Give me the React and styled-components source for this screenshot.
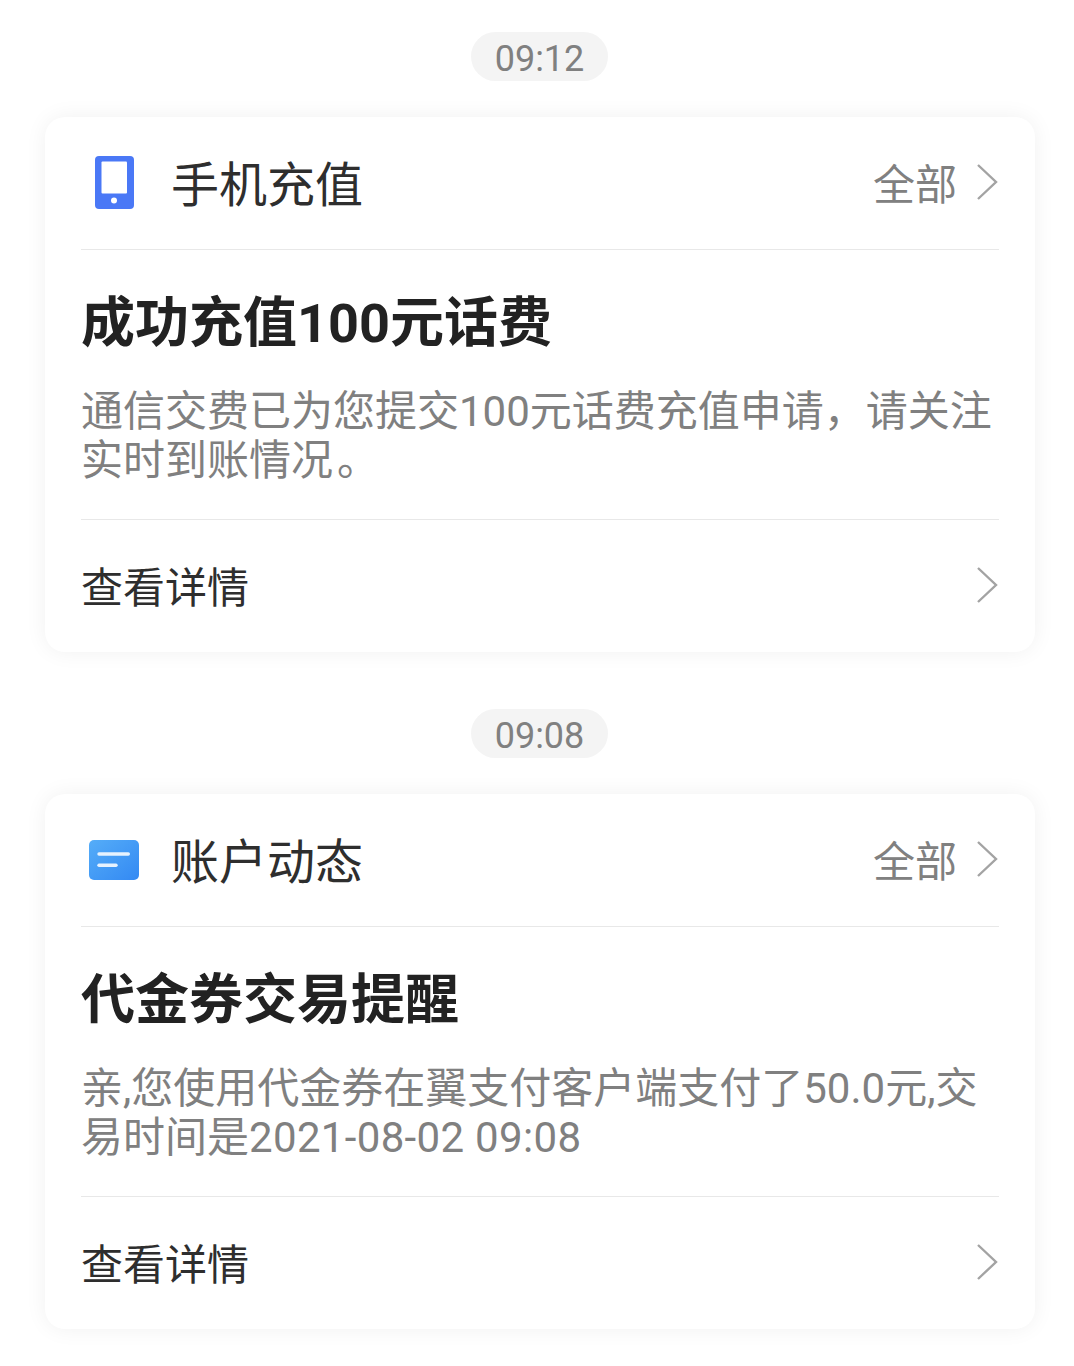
import styled, { createGlobalStyle } from "styled-components";

const GlobalStyle = createGlobalStyle`
  html, body {
    margin: 0;
    padding: 0;
    background: #ffffff;
  }
  body {
    font-family: Roboto, "Noto Sans CJK SC", sans-serif;
  }
`;

function Chevron() {
  return (
    <ChevronSvg width="24" height="38" viewBox="0 0 24 38">
      <path d="M3 2 L21 19 L3 36" fill="none" stroke="#a3a3a3" strokeWidth="2.4" />
    </ChevronSvg>
  );
}

function PhoneIcon() {
  return (
    <svg width="39" height="53" viewBox="0 0 39 53">
      <rect width="39" height="53" rx="4" fill="#4a78f6" />
      <rect x="6.5" y="5.5" width="25.5" height="32" rx="1" fill="#fff" />
      <circle cx="19" cy="44.5" r="3" fill="#fff" />
    </svg>
  );
}

function AccountIcon() {
  return (
    <svg width="50" height="40" viewBox="0 0 50 40">
      <defs>
        <linearGradient id="acct" x1="0" y1="0" x2="1" y2="1">
          <stop offset="0" stopColor="#55adf8" />
          <stop offset="1" stopColor="#3389f3" />
        </linearGradient>
      </defs>
      <rect width="50" height="40" rx="5" fill="url(#acct)" />
      <rect x="8.3" y="12.3" width="32.7" height="3.4" rx="1.7" fill="#e6f2fe" />
      <rect x="8.3" y="23.6" width="20.4" height="3.4" rx="1.7" fill="#e6f2fe" />
    </svg>
  );
}

function Notice({ time, icon, category, title, children }) {
  return (
    <Section>
      <TimePill>{time}</TimePill>
      <Card>
        <CardHead>
          <IconSlot>{icon}</IconSlot>
          <Category>{category}</Category>
          <AllLink>全部</AllLink>
          <Chevron />
        </CardHead>
        <Title>{title}</Title>
        <Body>{children}</Body>
        <DetailRow>
          <DetailText>查看详情</DetailText>
          <Chevron />
        </DetailRow>
      </Card>
    </Section>
  );
}

export default function App() {
  return (
    <Page>
      <GlobalStyle />
      <Notice
        time="09:12"
        icon={<PhoneIcon />}
        category="手机充值"
        title="成功充值100元话费"
      >
        通信交费已为您提交100元话费充值申请，请关注实时到账情况<Period>。</Period>
      </Notice>
      <Notice
        time="09:08"
        icon={<AccountIcon />}
        category="账户动态"
        title="代金券交易提醒"
      >
        亲,您使用代金券在翼支付客户端支付了50.0元,交易时间是<Stamp>2021-08-02 09:08</Stamp>
      </Notice>
    </Page>
  );
}

const Page = styled.div`
  width: 1080px;
  height: 1366px;
  padding-top: 32px;
  box-sizing: border-box;
  overflow: hidden;
  display: flex;
  flex-direction: column;
  gap: 57px;
`;

const Section = styled.section`
  display: flex;
  flex-direction: column;
  align-items: center;
  gap: 36px;
`;

const TimePill = styled.div`
  width: 137px;
  height: 49px;
  margin-right: 1px;
  border-radius: 25px;
  background: #f4f4f4;
  color: #808080;
  font-size: 36px;
  line-height: 55px;
  text-align: center;
`;

const Card = styled.div`
  width: 990px;
  height: 535px;
  box-sizing: border-box;
  padding: 0 36px;
  background: #ffffff;
  border-radius: 20px;
  box-shadow: 0 0 22px rgba(0, 0, 0, 0.06);
  display: flex;
  flex-direction: column;
`;

const CardHead = styled.div`
  height: 133px;
  flex: none;
  box-sizing: border-box;
  padding-bottom: 2px;
  border-bottom: 1px solid #e8e8e8;
  display: flex;
  align-items: center;
`;

const IconSlot = styled.div`
  width: 66px;
  margin-right: 24px;
  margin-top: 1px;
  display: flex;
  justify-content: center;
`;

const Category = styled.div`
  flex: 1;
  color: #2e2e2e;
  font-size: 48px;
  margin-bottom: 2px;
`;

const AllLink = styled.div`
  color: #808080;
  font-size: 42px;
  margin-right: 18px;
  margin-bottom: 2px;
`;

const ChevronSvg = styled.svg`
  flex: none;
  display: block;
`;

const Title = styled.h2`
  margin: 41px 0 0;
  color: #222222;
  font-size: 54px;
  font-weight: 700;
  line-height: 66px;
`;

const Body = styled.p`
  margin: 30px 0 0;
  height: 133px;
  box-sizing: border-box;
  color: #808080;
  font-size: 42px;
  line-height: 49px;
  border-bottom: 1px solid #e8e8e8;
`;

const Period = styled.span`
  padding-left: 4px;
`;

const Stamp = styled.span`
  letter-spacing: 0.33px;
`;

const DetailRow = styled.div`
  flex: 1;
  padding-bottom: 3px;
  display: flex;
  align-items: center;
`;

const DetailText = styled.div`
  flex: 1;
  color: #2e2e2e;
  font-size: 42px;
`;
